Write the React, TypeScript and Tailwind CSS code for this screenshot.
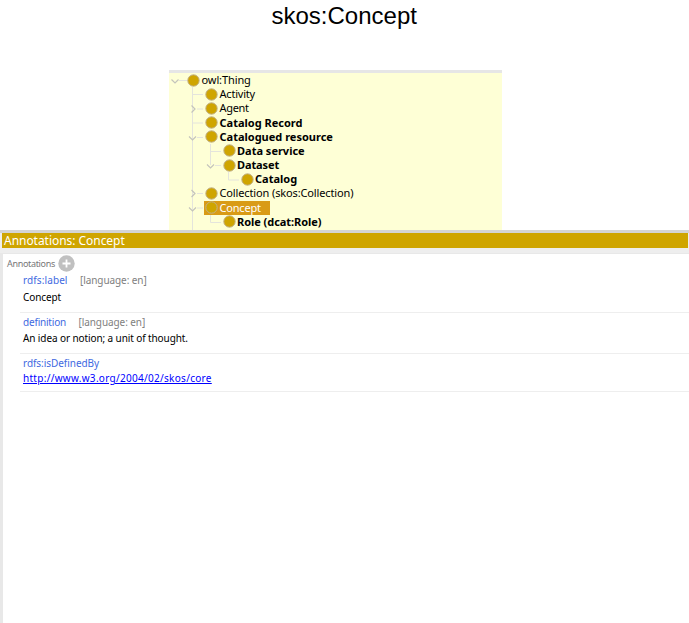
type TreeNode = {
  label: string;
  indent: string;
  text: string;
  selected?: boolean;
};

const nodes: TreeNode[] = [
  { label: "owl:Thing", indent: "pl-[18px]", text: "tracking-[-0.1px]" },
  { label: "Activity", indent: "pl-[36px]", text: "tracking-[-0.2px]" },
  { label: "Agent", indent: "pl-[36px]", text: "tracking-[-0.3px]" },
  { label: "Catalog Record", indent: "pl-[36px]", text: "font-bold" },
  { label: "Catalogued resource", indent: "pl-[36px]", text: "font-bold" },
  { label: "Data service", indent: "pl-[53.5px]", text: "font-bold" },
  { label: "Dataset", indent: "pl-[53.5px]", text: "font-bold tracking-[-0.1px]" },
  { label: "Catalog", indent: "pl-[71.5px]", text: "font-bold" },
  { label: "Collection (skos:Collection)", indent: "pl-[36px]", text: "tracking-[-0.13px]" },
  { label: "Concept", indent: "pl-[36px]", text: "tracking-[-0.2px]", selected: true },
  { label: "Role (dcat:Role)", indent: "pl-[53.5px]", text: "font-bold tracking-[-0.05px]" },
];

function TreeLines() {
  return (
    <svg className="absolute left-0 top-0" width="333" height="157" fill="none">
      <path
        d="M23.5 14V157 M10 7.5H18 M24 21.5H34 M28 36H34 M24 50H34 M28 64.5H34 M41.5 71V92 M41.5 78.5H52 M46 92.5H52 M59.5 99V107H70 M28 120.5H34 M28 135H34 M41.5 142V149.5H52"
        stroke="#e4e4dc"
      />
      <path
        d="M2.5 6.5L6 10L9.5 6.5 M22.5 32.5L26 36L22.5 39.5 M20 63.5L23.5 67L27 63.5 M38 91.5L41.5 95L45 91.5 M22.5 117L26 120.5L22.5 124 M20 134.5L23.5 138L27 134.5"
        stroke="#c4c4bc"
        strokeWidth="1.2"
      />
    </svg>
  );
}

function Tree() {
  return (
    <div className="ml-[169px] h-[160px] w-[333px] overflow-hidden border-t-[3px] border-[#e6e6e6] bg-[#feffd6]">
      <div className="relative">
        <TreeLines />
        {nodes.map((n) => (
          <div key={n.label} className={`relative flex h-[14.18px] items-center ${n.indent}`}>
            <div
              className={
                n.selected
                  ? "-ml-[1px] flex h-[14px] w-[66px] items-center bg-[#d99b16] pl-[1px] text-white"
                  : "flex items-center"
              }
            >
              <svg className="shrink-0" width="13" height="13" viewBox="0 0 13 13">
                <circle cx="6.5" cy="6.5" r="5.7" fill="#cfa500" stroke="#c0b08a" strokeWidth="1" />
              </svg>
              <span className={`ml-[1.5px] text-[11px] leading-[14px] whitespace-nowrap ${n.text}`}>
                {n.label}
              </span>
            </div>
          </div>
        ))}
      </div>
    </div>
  );
}

export default function App() {
  return (
    <div className="flex h-[623px] w-[689px] flex-col overflow-hidden bg-white font-['Noto_Sans','Open_Sans',sans-serif] text-black">
      <h1 className="h-[70px] pl-[271.5px] pt-[2px] font-['Liberation_Sans',Arial,sans-serif] text-[24px] leading-[28px]">
        skos:Concept
      </h1>
      <Tree />
      <div className="h-[3px] bg-[#d4d4d4]" />
      <div className="flex h-[15px] items-center border-x border-l-2 border-[#eeeeee] bg-[#cfa500] pl-[2px] text-[12px] leading-[15px] text-white">
        <span className="tracking-[-0.04px]">Annotations: Concept</span>
      </div>
      <div className="h-[5px] bg-[#eeeeee]" />
      <main className="flex-1 border-l-[3px] border-t border-[#e8e8e8] pl-[4px]">
        <div className="flex h-[19px] items-center">
          <span className="w-[51px] whitespace-nowrap pt-[1px] text-[9px] leading-[12px] tracking-[-0.33px] text-[#777777]">Annotations</span>
          <svg width="17" height="17" viewBox="0 0 17 17">
            <circle cx="8.5" cy="8.5" r="8.2" fill="#c0c0c0" />
            <path d="M8.5 4.5V12.5M4.5 8.5H12.5" stroke="white" strokeWidth="1.8" />
          </svg>
        </div>
        <div className="ml-[13px] text-[10px] leading-[14px]">
          <section className="h-[40px] border-b border-[#eeeeee] pl-[3px]">
            <div className="flex">
              <span className="w-[57px] tracking-[0.1px] text-[#4169e1]">rdfs:label</span>
              <span className="tracking-[-0.08px] text-[#808080]">[language: en]</span>
            </div>
            <p className="mt-[3px] tracking-[-0.1px]">Concept</p>
          </section>
          <section className="h-[41px] border-b border-[#eeeeee] pl-[3px] pt-[2px]">
            <div className="flex">
              <span className="w-[55.5px] tracking-[-0.2px] text-[#4169e1]">definition</span>
              <span className="tracking-[-0.08px] text-[#808080]">[language: en]</span>
            </div>
            <p className="mt-[2px] tracking-[-0.1px]">An idea or notion; a unit of thought.</p>
          </section>
          <section className="h-[38px] border-b border-[#eeeeee] pl-[3px] pt-[2px]">
            <div className="tracking-[-0.05px] text-[#4169e1]">rdfs:isDefinedBy</div>
            <a className="mt-[1px] block tracking-[0.29px] text-[#0000ff] underline">http://www.w3.org/2004/02/skos/core</a>
          </section>
        </div>
      </main>
    </div>
  );
}
